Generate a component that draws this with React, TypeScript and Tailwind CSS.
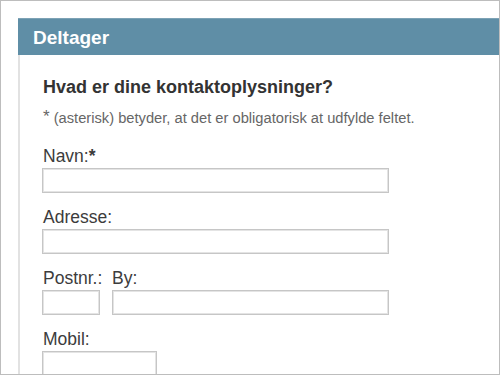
const font = { fontFamily: '"Liberation Sans", Arial, sans-serif' };

function Field({ className = "" }: { className?: string }) {
  return (
    <div
      className={`h-[25px] border border-[#c6c6c6] bg-white shadow-[inset_0_0_0_1px_#e4e4e4] ${className}`}
    />
  );
}

function Label({ children }: { children: React.ReactNode }) {
  return (
    <div className="text-[17.5px] leading-[20px] text-[#3c3c3c] mb-[2px]">
      {children}
    </div>
  );
}

export default function App() {
  return (
    <div
      style={font}
      className="w-[500px] h-[375px] overflow-hidden border border-[#bdbdbd] bg-white pt-[17px] pl-[17px]"
    >
      <div className="h-full flex flex-col">
        <div className="h-[37px] shrink-0 bg-[#5f8ea6] border-t border-[#7da2b5] flex items-center pl-[15px]">
          <h1 className="text-[19px] font-bold text-white leading-none">
            Deltager
          </h1>
        </div>
        <div className="flex-1 border-l-2 border-[#e2e2e2] pl-[23px] pt-[21px]">
          <h2 className="text-[18px] font-bold leading-[22px] text-[#333]">
            Hvad er dine kontaktoplysninger?
          </h2>
          <p className="mt-[9px] text-[14.7px] leading-[20px] text-[#666]">
            <span className="text-[17px] align-[1px]">*</span> (asterisk)
            betyder, at det er obligatorisk at udfylde feltet.
          </p>

          <div className="mt-[18px]">
            <Label>
              Navn:<span className="font-bold">*</span>
            </Label>
            <Field className="w-[347px] -ml-px" />
          </div>

          <div className="mt-[14px]">
            <Label>Adresse:</Label>
            <Field className="w-[347px] -ml-px" />
          </div>

          <div className="mt-[14px]">
            <div className="flex text-[17.5px] leading-[20px] text-[#3c3c3c] mb-[2px]">
              <span className="w-[69px]">Postnr.:</span>
              <span>By:</span>
            </div>
            <div className="flex gap-[12px] -ml-px">
              <Field className="w-[58px]" />
              <Field className="w-[277px]" />
            </div>
          </div>

          <div className="mt-[14px]">
            <Label>Mobil:</Label>
            <Field className="w-[115px] -ml-px" />
          </div>
        </div>
      </div>
    </div>
  );
}
